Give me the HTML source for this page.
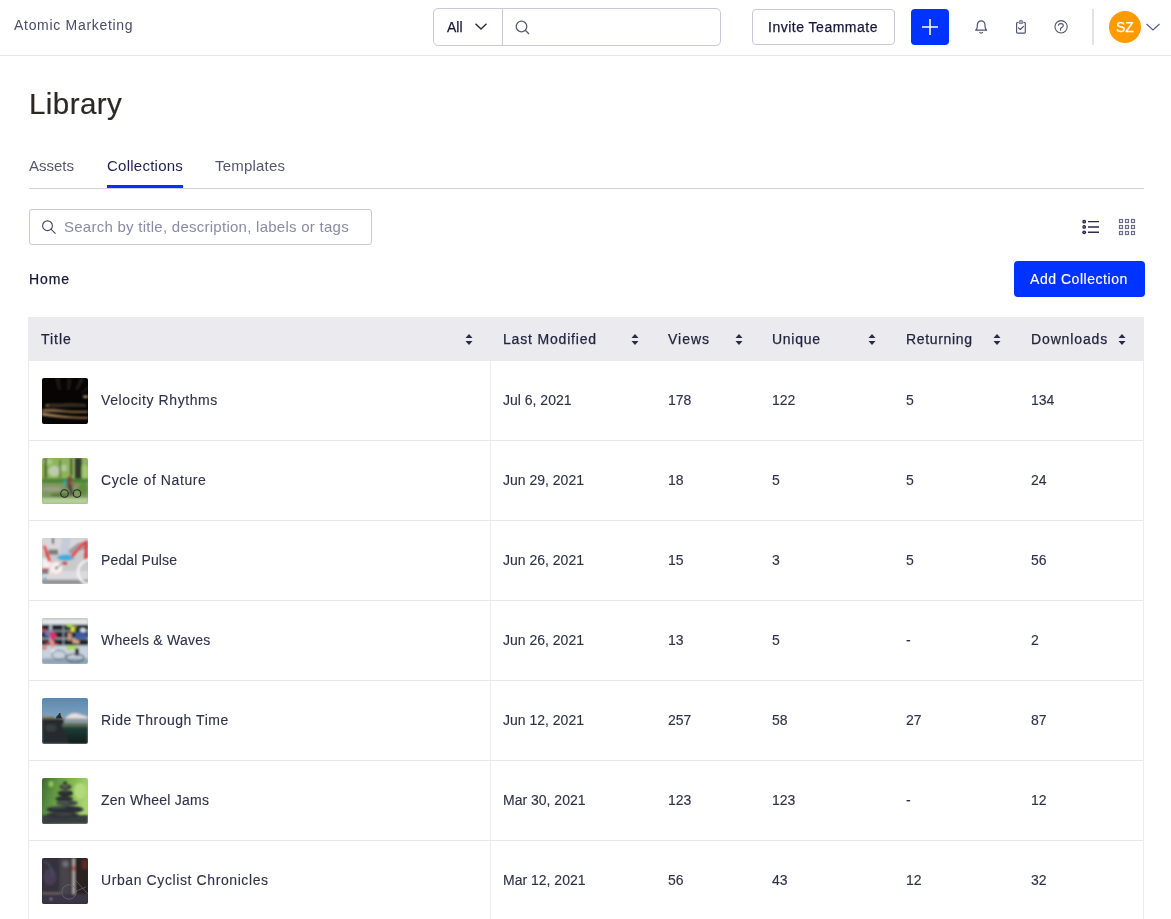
<!DOCTYPE html>
<html><head><meta charset="utf-8">
<style>
*{box-sizing:border-box;margin:0;padding:0}
html,body{width:1171px;height:919px;overflow:hidden;background:#fff;font-family:"Liberation Sans",sans-serif;color:#1f1f3d}
.abs{position:absolute}
.t{position:absolute;white-space:nowrap;line-height:1}
#hdr{position:absolute;left:0;top:0;width:1171px;height:56px;border-bottom:1px solid #e6e6ec}
.combo{position:absolute;left:433px;top:8px;width:288px;height:38px;border:1px solid #c9c8d8;border-radius:5px}
.combo .div{position:absolute;left:68px;top:0;width:1px;height:36px;background:#c9c8d8}
.btn-inv{position:absolute;left:752px;top:9px;width:143px;height:36px;border:1px solid #c9c8d8;border-radius:4px}
.btn-plus{position:absolute;left:911px;top:9px;width:38px;height:36px;background:#0033ff;border-radius:4px}
.vdiv{position:absolute;left:1092px;top:9px;width:2px;height:36px;background:#e3e2ea}
.avatar{position:absolute;left:1109px;top:11px;width:32px;height:32px;border-radius:50%;background:#ff9a00}
.tabline{position:absolute;left:29px;top:188px;width:1115px;height:1px;background:#d2d1dd}
.tabul{position:absolute;left:107px;top:185px;width:76px;height:3px;background:#0033ff}
.search{position:absolute;left:29px;top:209px;width:343px;height:36px;border:1px solid #c9c8d8;border-radius:3px}
.btn-add{position:absolute;left:1014px;top:261px;width:131px;height:36px;background:#0033ff;border-radius:4px}
#tbl{position:absolute;left:28px;top:317px;width:1116px;height:620px;border-left:1px solid #ebebf0;border-right:1px solid #ebebf0}
.thead{position:absolute;left:-1px;top:0;width:1116px;height:44px;background:#ebeaef}
.row{position:absolute;left:0;width:1114px;height:80px;border-bottom:1px solid #e6e6ec}
.vline{position:absolute;left:461px;top:44px;width:1px;height:600px;background:#ebebf0}
.th{position:absolute;top:15px;font-size:14px;-webkit-text-stroke:0.25px #24243f;color:#24243f;line-height:1;white-space:nowrap}
.sort{position:absolute;top:16px;width:8px;height:13px}
.td{position:absolute;top:32px;font-size:14px;color:#30304a;-webkit-text-stroke:0.12px #30304a;line-height:1;white-space:nowrap}
.thumb{position:absolute;left:13px;top:17px;width:46px;height:46px;border-radius:2px;overflow:hidden}
</style></head><body>
<svg width="0" height="0" style="position:absolute"><defs><filter id="b1" x="-10%" y="-10%" width="120%" height="120%"><feGaussianBlur stdDeviation="1"/></filter><filter id="b0"><feGaussianBlur stdDeviation="0.45"/></filter></defs></svg>
<div id="wrap" style="position:absolute;left:0;top:0;width:1171px;height:919px;overflow:hidden;will-change:transform">
<div id="hdr">
  <div class="t" style="left:14px;top:18px;font-size:14px;letter-spacing:0.7px;color:#4b4b6b">Atomic Marketing</div>
  <div class="combo"><div class="div"></div></div>
  <div class="t" id="tAll" style="left:447px;top:20px;font-size:14px;-webkit-text-stroke:0.25px #17173c;color:#17173c">All</div>
  <svg class="abs" style="left:474px;top:22px" width="14" height="9" viewBox="0 0 14 9"><path d="M1.5 1.8 L7 7 L12.5 1.8" fill="none" stroke="#2a2a45" stroke-width="1.4"/></svg>
  <svg class="abs" style="left:514px;top:19px" width="17" height="17" viewBox="0 0 17 17"><circle cx="7.5" cy="7.5" r="5.3" fill="none" stroke="#5b5b78" stroke-width="1.3"/><path d="M11.3 11.3 L15 15" stroke="#5b5b78" stroke-width="1.3"/></svg>
  <div class="btn-inv"></div>
  <div class="t" id="tInv" style="left:768px;letter-spacing:0.5px;top:20px;font-size:14px;-webkit-text-stroke:0.25px #17173c;color:#17173c">Invite Teammate</div>
  <div class="btn-plus"><svg class="abs" style="left:10px;top:9px" width="18" height="18" viewBox="0 0 18 18"><path d="M9 1V17M1 9H17" stroke="#fff" stroke-width="1.6"/></svg></div>
  <svg class="abs" style="left:972px;top:18px" width="18" height="18" viewBox="0 0 18 18"><path d="M3.6 12.1 C4.9 11.1 5.3 10.1 5.3 8.6 L5.3 7 C5.3 4.6 7 2.8 9.15 2.8 C11.3 2.8 13 4.6 13 7 L13 8.6 C13 10.1 13.4 11.1 14.7 12.1 Z" fill="none" stroke="#4f4f70" stroke-width="1.15" stroke-linejoin="round"/><path d="M7.7 14.3 Q9.15 15.7 10.6 14.3" fill="none" stroke="#4f4f70" stroke-width="1.1" stroke-linecap="round"/></svg>
  <svg class="abs" style="left:1012px;top:18px" width="18" height="18" viewBox="0 0 18 18"><path d="M6 4.5 H5.5 Q4.6 4.5 4.6 5.4 V14.2 Q4.6 15.1 5.5 15.1 H12.4 Q13.3 15.1 13.3 14.2 V5.4 Q13.3 4.5 12.4 4.5 H12" fill="none" stroke="#4f4f70" stroke-width="1.15" stroke-linecap="round"/><path d="M7.2 5.6 V3.6 Q7.2 2.3 9 2.3 Q10.8 2.3 10.8 3.6 V5.6 Z" fill="#a4a4ba" stroke="#6c6c8a" stroke-width="0.8" stroke-linejoin="round"/><path d="M6.4 9.9 L8.3 11.5 L11.6 8.3" fill="none" stroke="#4f4f70" stroke-width="1.1" stroke-linecap="round" stroke-linejoin="round"/></svg>
  <svg class="abs" style="left:1052px;top:18px" width="18" height="18" viewBox="0 0 18 18"><circle cx="9.1" cy="8.8" r="6.15" fill="none" stroke="#4f4f70" stroke-width="1.1"/><path d="M6.3 7.3 C6.7 6.2 7.6 5.6 8.9 5.6 C10.3 5.6 11.3 6.4 11.3 7.5 C11.3 8.6 10.2 9.1 9.2 9.8 C8.7 10.2 8.45 10.8 8.45 11.4 L8.45 12.3" fill="none" stroke="#4f4f70" stroke-width="1.1" stroke-linecap="round"/></svg>
  <div class="vdiv"></div>
  <div class="avatar"></div>
  <div class="t" id="tSZ" style="left:1116px;top:20px;font-size:14px;-webkit-text-stroke:0.25px #fff;color:#fff">SZ</div>
  <svg class="abs" style="left:1145px;top:22px" width="16" height="10" viewBox="0 0 16 10"><path d="M1.5 2 L8 8 L14.5 2" fill="none" stroke="#5b5b78" stroke-width="1.2"/></svg>
</div>

<div class="t" style="left:29px;top:89px;font-size:29.5px;letter-spacing:0.45px;color:#2b2826;-webkit-text-stroke:0.2px #2b2826">Library</div>
<div class="t" style="left:29px;top:158px;font-size:15px;color:#55556f">Assets</div>
<div class="t" style="left:107px;top:158px;font-size:15px;letter-spacing:0.25px;color:#1f1f4d">Collections</div>
<div class="t" style="left:215px;top:158px;font-size:15px;letter-spacing:0.2px;color:#55556f">Templates</div>
<div class="tabline"></div>
<div class="tabul"></div>

<div class="search"></div>
<svg class="abs" style="left:40px;top:219px" width="17" height="17" viewBox="0 0 17 17"><circle cx="7.5" cy="6.7" r="4.9" fill="none" stroke="#4a4a6c" stroke-width="1.15"/><path d="M11 10.2 L15.2 14.4" stroke="#4a4a6c" stroke-width="1.15" stroke-linecap="round"/></svg>
<div class="t" style="left:64px;top:219px;font-size:15px;letter-spacing:0.26px;color:#8b8aa5">Search by title, description, labels or tags</div>

<svg class="abs" style="left:1080px;top:218px" width="22" height="18" viewBox="0 0 22 18"><g fill="#24244a"><circle cx="4.2" cy="3.65" r="1.9"/><circle cx="4.2" cy="8.95" r="1.9"/><circle cx="4.2" cy="14.3" r="1.9"/></g><g fill="#fff" opacity="0.55"><circle cx="4.2" cy="3.65" r="0.6"/><circle cx="4.2" cy="8.95" r="0.6"/><circle cx="4.2" cy="14.3" r="0.6"/></g><g stroke="#2a2a50" stroke-width="1.4"><path d="M8 3.65H19M8 8.95H19M8 14.3H19"/></g></svg>
<svg class="abs" style="left:1118px;top:218px" width="18" height="18" viewBox="0 0 18 18"><g fill="none" stroke="#6c6c88" stroke-width="1.2"><rect x="1.5" y="1.5" width="3" height="3"/><rect x="1.5" y="7.5" width="3" height="3"/><rect x="1.5" y="13.5" width="3" height="3"/><rect x="7.5" y="1.5" width="3" height="3"/><rect x="7.5" y="7.5" width="3" height="3"/><rect x="7.5" y="13.5" width="3" height="3"/><rect x="13.5" y="1.5" width="3" height="3"/><rect x="13.5" y="7.5" width="3" height="3"/><rect x="13.5" y="13.5" width="3" height="3"/></g></svg>

<div class="t" id="tHome" style="left:29px;letter-spacing:0.87px;top:272px;font-size:14px;-webkit-text-stroke:0.25px #17173c;color:#17173c">Home</div>
<div class="btn-add"></div>
<div class="t" id="tAdd" style="left:1030px;letter-spacing:0.54px;top:272px;font-size:14px;-webkit-text-stroke:0.15px #fff;color:#fff">Add Collection</div>

<div id="tbl">
  <div class="thead">
<div class="th" style="left:13px;letter-spacing:0.97px">Title</div>
<svg class="sort" style="left:437px" width="8" height="13" viewBox="0 0 8 13"><path d="M4 1 L7.5 5 H0.5 Z M4 12 L7.5 8 H0.5 Z" fill="#2a2a45"/></svg>
<div class="th" style="left:475px;letter-spacing:0.82px">Last Modified</div>
<svg class="sort" style="left:603px" width="8" height="13" viewBox="0 0 8 13"><path d="M4 1 L7.5 5 H0.5 Z M4 12 L7.5 8 H0.5 Z" fill="#2a2a45"/></svg>
<div class="th" style="left:640px;letter-spacing:1.0px">Views</div>
<svg class="sort" style="left:707px" width="8" height="13" viewBox="0 0 8 13"><path d="M4 1 L7.5 5 H0.5 Z M4 12 L7.5 8 H0.5 Z" fill="#2a2a45"/></svg>
<div class="th" style="left:744px;letter-spacing:0.72px">Unique</div>
<svg class="sort" style="left:840px" width="8" height="13" viewBox="0 0 8 13"><path d="M4 1 L7.5 5 H0.5 Z M4 12 L7.5 8 H0.5 Z" fill="#2a2a45"/></svg>
<div class="th" style="left:878px;letter-spacing:0.67px">Returning</div>
<svg class="sort" style="left:965px" width="8" height="13" viewBox="0 0 8 13"><path d="M4 1 L7.5 5 H0.5 Z M4 12 L7.5 8 H0.5 Z" fill="#2a2a45"/></svg>
<div class="th" style="left:1003px;letter-spacing:0.87px">Downloads</div>
<svg class="sort" style="left:1090px" width="8" height="13" viewBox="0 0 8 13"><path d="M4 1 L7.5 5 H0.5 Z M4 12 L7.5 8 H0.5 Z" fill="#2a2a45"/></svg>
</div>
<div class="row" style="top:44px">
<div class="thumb" id="th0"><svg width="46" height="46" viewBox="0 0 46 46"><rect width="46" height="46" fill="#060504"/>
<g filter="url(#b1)">
<polygon points="13,0 18,0 19,12 16,12" fill="#1a1814"/>
<polygon points="25,0 30,0 28,12 25,12" fill="#1a1814"/>
<polygon points="38,0 43,0 36,12 33,12" fill="#1e1b16"/>
<polygon points="46,7 46,11 41,15 39,14" fill="#1a1814"/>
<ellipse cx="43.5" cy="18.8" rx="2.8" ry="1.2" fill="#b89468"/>
<path d="M4 26 C10 25 16 26 22 25.5 C30 25 36 26 44 26 L44 29 C34 28.5 26 29 18 29 C12 29 8 29 4 28.5Z" fill="#3a2e22"/>
<ellipse cx="5" cy="27.6" rx="2" ry="0.9" fill="#98784e"/>
<path d="M0 31.5 C8 30.5 16 31.5 24 32.5 C32 33.3 40 33 46 33 L46 34.6 C38 35 30 34.6 22 34.2 C14 33.8 6 33.8 0 33.8Z" fill="#94744e"/>
<path d="M0 34.5 C6 35.5 12 36.5 20 37.5 C28 38.5 36 39 46 39 L46 40.6 C36 40.6 26 40.2 18 39.6 C10 38.8 4 38 0 37.4Z" fill="#b08a5c"/>
</g></svg></div>
<div class="td" style="left:72px;letter-spacing:0.6px">Velocity Rhythms</div>
<div class="td" style="left:474px">Jul 6, 2021</div>
<div class="td" style="left:639px">178</div>
<div class="td" style="left:743px">122</div>
<div class="td" style="left:877px">5</div>
<div class="td" style="left:1002px">134</div>
</div>
<div class="row" style="top:124px">
<div class="thumb" id="th1"><svg width="46" height="46" viewBox="0 0 46 46"><rect width="46" height="46" fill="#8cb45c"/>
<g filter="url(#b1)">
<ellipse cx="12" cy="13" rx="5.5" ry="5.5" fill="#bccca8"/>
<ellipse cx="22" cy="10" rx="3" ry="3.5" fill="#b0c89c"/>
<ellipse cx="6" cy="4" rx="5" ry="3" fill="#a8c880"/>
<ellipse cx="43" cy="14" rx="4" ry="7" fill="#a0c870"/>
<rect x="2.5" y="0" width="2.2" height="20" fill="#4a5a30"/>
<rect x="17.5" y="2" width="1.4" height="18" fill="#5a6a3a"/>
<rect x="28.5" y="0" width="1.6" height="17" fill="#363f24"/>
<rect x="33" y="0" width="6.5" height="22.5" fill="#33382a"/>
<rect x="0" y="20.5" width="46" height="4.5" fill="#4e8436"/>
<rect x="0" y="25" width="46" height="15" fill="#7e9860"/>
<ellipse cx="10" cy="31" rx="10" ry="2.5" fill="#9aa080"/>
<ellipse cx="18" cy="37" rx="10" ry="2" fill="#5e7840"/>
<rect x="0" y="40" width="46" height="6" fill="#b4d098"/>
<ellipse cx="41" cy="31" rx="5" ry="6" fill="#5e8e40"/>
<path d="M26 19 L30 19.5 L31 27 L28 30 L24.5 29 L25 22Z" fill="#6e4e3e"/>
<ellipse cx="23" cy="25" rx="1.8" ry="2.2" fill="#2aa8a8"/>
<path d="M25.5 28 L30 28 L31.5 37 L28.5 37.5Z" fill="#44444a"/>
<path d="M29 23 L34 27.5 L33.2 28.5 L28.5 25Z" fill="#a87058"/>
<circle cx="28.5" cy="18.5" r="1.5" fill="#8a5e46"/>
</g>
<g filter="url(#b0)">
<circle cx="22.5" cy="35.5" r="3.8" fill="none" stroke="#22221c" stroke-width="1.1"/>
<circle cx="35" cy="35.5" r="3.8" fill="none" stroke="#22221c" stroke-width="1.1"/>
</g></svg></div>
<div class="td" style="left:72px;letter-spacing:0.6px">Cycle of Nature</div>
<div class="td" style="left:474px">Jun 29, 2021</div>
<div class="td" style="left:639px">18</div>
<div class="td" style="left:743px">5</div>
<div class="td" style="left:877px">5</div>
<div class="td" style="left:1002px">24</div>
</div>
<div class="row" style="top:204px">
<div class="thumb" id="th2"><svg width="46" height="46" viewBox="0 0 46 46"><rect width="46" height="46" fill="#cacacc"/>
<g filter="url(#b1)">
<rect x="0" y="0" width="46" height="14" fill="#d8d8da"/>
<rect x="10" y="0" width="2" height="6" fill="#505052"/>
<path d="M24 14 L36 5 L46 3 L46 10 L30 16 Z" fill="#9c9ca2"/>
<rect x="6.5" y="11.5" width="9.5" height="5" fill="#7a7a7c"/>
<path d="M20 0 L29 0 L26 17 L17.5 17Z" fill="#c4ccd8"/>
<rect x="0" y="41.5" width="46" height="4.5" fill="#929296"/>
<rect x="0" y="33" width="46" height="8.5" fill="#dadade"/>
<path d="M0 20 L9 22 L9 36 L0 36Z" fill="#f2f2f4"/>
<circle cx="14.3" cy="30.1" r="6.5" fill="#f6f2f2" stroke="#f0c0c0" stroke-width="1"/>
<circle cx="14.3" cy="30.1" r="1.3" fill="#5a5a5c"/>
<path d="M14.3 30.1 L21.4 24.7" stroke="#3c3c3e" stroke-width="0.9"/>
<rect x="21" y="23.6" width="4" height="3" fill="#c84040"/>
<ellipse cx="23.8" cy="19.5" rx="8.5" ry="3" fill="#40ace0"/>
<path d="M0.5 8 L4 7.5 L9 23.6 L6.2 24Z" fill="#ea4444"/>
<path d="M28.5 18 L41 3.5 L43 5 L30.5 20Z" fill="#ea4040"/>
<rect x="42.2" y="2.5" width="3.4" height="22" fill="#dc4040"/>
<circle cx="48" cy="34" r="12" fill="none" stroke="#f6f6f6" stroke-width="2.4"/>
<rect x="0" y="30" width="6.7" height="1.8" fill="#d24444"/>
<rect x="0" y="31.8" width="6.7" height="4.2" fill="#7a7a7c"/>
<ellipse cx="3" cy="40.4" rx="1.8" ry="1" fill="#3aa0d0"/>
</g></svg></div>
<div class="td" style="left:72px;letter-spacing:0.13px">Pedal Pulse</div>
<div class="td" style="left:474px">Jun 26, 2021</div>
<div class="td" style="left:639px">15</div>
<div class="td" style="left:743px">3</div>
<div class="td" style="left:877px">5</div>
<div class="td" style="left:1002px">56</div>
</div>
<div class="row" style="top:284px">
<div class="thumb" id="th3"><svg width="46" height="46" viewBox="0 0 46 46"><rect width="46" height="46" fill="#b8c6d4"/>
<g filter="url(#b1)">
<rect x="0" y="0" width="46" height="1.3" fill="#c8b890"/>
<rect x="0" y="1.3" width="46" height="5.4" fill="#e4e6ea"/>
<rect x="0" y="6.7" width="46" height="21" fill="#1c2229"/>
<rect x="7.2" y="6.7" width="2.8" height="21" fill="#b8bcc2"/>
<rect x="20.8" y="6.7" width="1.2" height="21" fill="#9aa2aa"/>
<rect x="0" y="12.1" width="46" height="1.7" fill="#8a929a"/>
<rect x="0" y="19.8" width="46" height="1.6" fill="#a8b0b8"/>
<rect x="0" y="27.4" width="46" height="13" fill="#c8d2dc"/>
<rect x="0" y="40.4" width="46" height="5.6" fill="#90a4b8"/>
<ellipse cx="2" cy="12.4" rx="2" ry="1.5" fill="#e04030"/>
<ellipse cx="5" cy="16" rx="2.2" ry="2.4" fill="#5a78d0"/>
<path d="M7 14 L13 14.5 L15 18 L12 23 L8.5 21Z" fill="#d83070"/>
<path d="M3 24 L15 25 L16 27 L4 26.5Z" fill="#d83848"/>
<path d="M9 22 L12 23 L11.5 30 L9 30Z" fill="#e0a088"/>
<ellipse cx="12" cy="33" rx="3" ry="1.2" fill="#f0f2f6"/>
<ellipse cx="2.5" cy="30" rx="2.5" ry="1.5" fill="#e06050"/>
<ellipse cx="17" cy="37" rx="7" ry="4.5" fill="none" stroke="#5a6a7a" stroke-width="1"/>
<ellipse cx="27.3" cy="7.3" rx="3.2" ry="1.8" fill="#9cd84a"/>
<path d="M28.5 8.3 L35 8.3 L35 13.8 L29 13.8Z" fill="#e0dc40"/>
<path d="M32.8 8.9 L40.4 8.9 L40.4 14.9 L32.8 14.9Z" fill="#23402e"/>
<ellipse cx="41" cy="12.2" rx="2.7" ry="2.2" fill="#d8e0f0"/>
<path d="M33 14.5 L44.8 14.5 L44.8 20.5 L34 20.9Z" fill="#3a5aa4"/>
<path d="M25.5 15 L30 15.5 L29 22.5 L26 22.5Z" fill="#d09878"/>
<path d="M30 21 L37.5 22.5 L37 26 L30.5 25Z" fill="#d8a888"/>
<path d="M24 28.5 L34 27.5 L35 31 L25 32Z" fill="#a8e040"/>
<rect x="33" y="30.6" width="4" height="7" fill="#222222"/>
<ellipse cx="33" cy="40" rx="9" ry="4" fill="none" stroke="#4a5a6a" stroke-width="1.2"/>
</g></svg></div>
<div class="td" style="left:72px;letter-spacing:0.24px">Wheels &amp; Waves</div>
<div class="td" style="left:474px">Jun 26, 2021</div>
<div class="td" style="left:639px">13</div>
<div class="td" style="left:743px">5</div>
<div class="td" style="left:877px">-</div>
<div class="td" style="left:1002px">2</div>
</div>
<div class="row" style="top:364px">
<div class="thumb" id="th4"><svg width="46" height="46" viewBox="0 0 46 46"><defs><linearGradient id="sky5" x1="0" y1="0" x2="0" y2="1"><stop offset="0" stop-color="#5a88b2"/><stop offset="1" stop-color="#b0c2cc"/></linearGradient>
<linearGradient id="val5" x1="0" y1="0" x2="0" y2="1"><stop offset="0" stop-color="#22403a"/><stop offset="1" stop-color="#0e1c18"/></linearGradient></defs>
<rect width="46" height="46" fill="url(#sky5)"/>
<g filter="url(#b1)">
<rect x="20" y="18.7" width="26" height="7" fill="#8a9aa2"/>
<path d="M23.6 19.5 L29 15.5 L34 14.9 L40.4 17 L46 19 L46 20.5 L23.6 20.5Z" fill="#e6dede"/>
<rect x="20" y="25" width="26" height="5" fill="#5e6c52"/>
<rect x="20" y="28.5" width="26" height="17.5" fill="url(#val5)"/>
<path d="M0 20.5 L12 20.5 L22 21 L22 24 L20 28 L24 36 L27 46 L0 46Z" fill="#262c2e"/>
<rect x="0" y="19" width="12" height="2" fill="#7a6c3a"/>
<ellipse cx="9" cy="30" rx="6" ry="4" fill="#343c3e"/>
</g>
<path d="M14 20.5 C14 18.5 15.5 17.5 16.5 16.8 L17.2 15 L18.5 15.2 L18.6 17 L19.5 19 L20.5 20.5Z" fill="#2a2a26" filter="url(#b0)"/></svg></div>
<div class="td" style="left:72px;letter-spacing:0.53px">Ride Through Time</div>
<div class="td" style="left:474px">Jun 12, 2021</div>
<div class="td" style="left:639px">257</div>
<div class="td" style="left:743px">58</div>
<div class="td" style="left:877px">27</div>
<div class="td" style="left:1002px">87</div>
</div>
<div class="row" style="top:444px">
<div class="thumb" id="th5"><svg width="46" height="46" viewBox="0 0 46 46"><defs><linearGradient id="g6" x1="0" y1="0" x2="1" y2="0.3"><stop offset="0" stop-color="#3c6a30"/><stop offset="0.5" stop-color="#72ae48"/><stop offset="1" stop-color="#a8d46c"/></linearGradient></defs>
<rect width="46" height="46" fill="url(#g6)"/>
<g filter="url(#b1)">
<ellipse cx="9" cy="6" rx="2.5" ry="3" fill="#8ac858"/>
<ellipse cx="38" cy="13" rx="6" ry="8" fill="#b2da7c"/>
<rect x="0" y="37" width="46" height="9" fill="#393d41"/>
<ellipse cx="23" cy="4.8" rx="2.2" ry="1.3" fill="#2c2f33"/>
<ellipse cx="23.5" cy="8.8" rx="6" ry="2.6" fill="#313236"/>
<ellipse cx="23" cy="8.3" rx="3.5" ry="0.9" fill="#7a7068"/>
<ellipse cx="23.5" cy="15.2" rx="8" ry="2.9" fill="#26292c"/>
<ellipse cx="23" cy="14" rx="5" ry="0.8" fill="#3c3f44"/>
<ellipse cx="22.2" cy="20.8" rx="9" ry="2.7" fill="#2c2f33"/>
<ellipse cx="25" cy="25" rx="11" ry="2.6" fill="#3a3d42"/>
<ellipse cx="22" cy="24.2" rx="6" ry="0.9" fill="#5a5e62"/>
<ellipse cx="23" cy="31.5" rx="18.5" ry="3.8" fill="#2c2f34"/>
<ellipse cx="16" cy="29.5" rx="8" ry="1" fill="#4a4e52"/>
<ellipse cx="20.5" cy="37.2" rx="16.5" ry="3.2" fill="#303338"/>
<ellipse cx="22" cy="36" rx="9" ry="0.9" fill="#45484c"/>
</g></svg></div>
<div class="td" style="left:72px;letter-spacing:0.22px">Zen Wheel Jams</div>
<div class="td" style="left:474px">Mar 30, 2021</div>
<div class="td" style="left:639px">123</div>
<div class="td" style="left:743px">123</div>
<div class="td" style="left:877px">-</div>
<div class="td" style="left:1002px">12</div>
</div>
<div class="row" style="top:524px">
<div class="thumb" id="th6"><svg width="46" height="46" viewBox="0 0 46 46"><rect width="46" height="46" fill="#2c2830"/>
<g filter="url(#b1)">
<rect x="0" y="0" width="17.6" height="34.5" fill="#34323e"/>
<ellipse cx="8" cy="19" rx="6.5" ry="8.5" fill="#463c54"/>
<path d="M2 3 C9 7 12 13 9 19" stroke="#54546a" stroke-width="1.1" fill="none"/>
<rect x="17.6" y="0" width="11" height="36" fill="#46444c"/>
<ellipse cx="23.5" cy="6" rx="3" ry="3" fill="#6e6e76"/>
<rect x="30" y="0" width="3.4" height="38.3" fill="#aaa2a2"/>
<rect x="30.5" y="8" width="2.2" height="5" fill="#c04a30"/>
<rect x="33.4" y="0" width="12.6" height="36" fill="#2a2224"/>
<rect x="40" y="2" width="6" height="9" fill="#5e2a22"/>
<rect x="0" y="34.5" width="18.7" height="1.5" fill="#7a6e66"/>
<rect x="0" y="36" width="46" height="10" fill="#3a3644"/>
<circle cx="9" cy="41" r="1" fill="#a0a0a8"/>
</g>
<circle cx="27" cy="34" r="7.2" fill="none" stroke="#6e6e74" stroke-width="0.7"/>
<path d="M32.8 21.4 L45.9 36 M32 34 L44 29" stroke="#707078" stroke-width="0.6"/></svg></div>
<div class="td" style="left:72px;letter-spacing:0.6px">Urban Cyclist Chronicles</div>
<div class="td" style="left:474px">Mar 12, 2021</div>
<div class="td" style="left:639px">56</div>
<div class="td" style="left:743px">43</div>
<div class="td" style="left:877px">12</div>
<div class="td" style="left:1002px">32</div>
</div>
<div class="vline"></div>
</div>
</div>
</body></html>
